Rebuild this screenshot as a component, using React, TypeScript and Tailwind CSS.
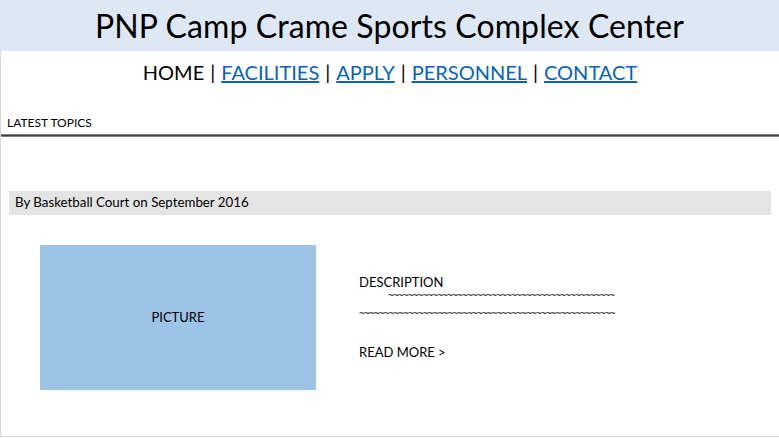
import React from "react";

export default function App() {
  return (
    <div className="w-[779px] h-[438px] bg-white overflow-hidden text-black" style={{ fontFamily: "Lato, 'Open Sans', sans-serif" }}>
      <div className="h-[51px] bg-[#dde8f4] flex items-center justify-center">
        <h1 className="text-[32px] leading-none font-normal tracking-[0.1px]">PNP Camp Crame Sports Complex Center</h1>
      </div>
      <div className="h-[386px] border-l border-b border-[#d9d9d9] flex flex-col">
        <nav className="mt-[8px] flex justify-center text-[20px] leading-[26px]">
          <span>HOME</span>
          <span className="mx-[6px]">|</span>
          <a className="text-[#0563c1] underline">FACILITIES</a>
          <span className="mx-[6px]">|</span>
          <a className="text-[#0563c1] underline">APPLY</a>
          <span className="mx-[6px]">|</span>
          <a className="text-[#0563c1] underline">PERSONNEL</a>
          <span className="mx-[6px]">|</span>
          <a className="text-[#0563c1] underline">CONTACT</a>
        </nav>
        <div className="mt-[31px] pl-[6px] text-[12px] leading-[14px]">LATEST TOPICS</div>
        <div className="mt-[4px] h-[3px] border-t border-b border-[#7f7f7f] bg-[#404040]" />
        <div className="mt-[54px] mx-[8px] h-[24px] bg-[#e4e4e4] flex items-center pl-[6px] text-[13.3px]">
          By Basketball Court on September 2016
        </div>
        <div className="mt-[30px] flex">
          <div className="ml-[39px] w-[276px] h-[145px] bg-[#9dc3e6] flex items-center justify-center text-[13px]">
            PICTURE
          </div>
          <div className="ml-[43px] mt-[29px] flex flex-col text-[13px]">
            <div className="leading-[16px]">DESCRIPTION</div>
            <div className="ml-[29px] whitespace-nowrap text-[10px] leading-[10px] tracking-[-0.8px]" style={{ fontFamily: "'Open Sans', sans-serif" }}>{"~".repeat(46)}</div>
            <div className="mt-[8px] whitespace-nowrap text-[10px] leading-[10px] tracking-[-0.8px]" style={{ fontFamily: "'Open Sans', sans-serif" }}>{"~".repeat(52)}</div>
            <div className="mt-[26px] leading-[16px]">READ MORE &gt;</div>
          </div>
        </div>
      </div>
    </div>
  );
}
